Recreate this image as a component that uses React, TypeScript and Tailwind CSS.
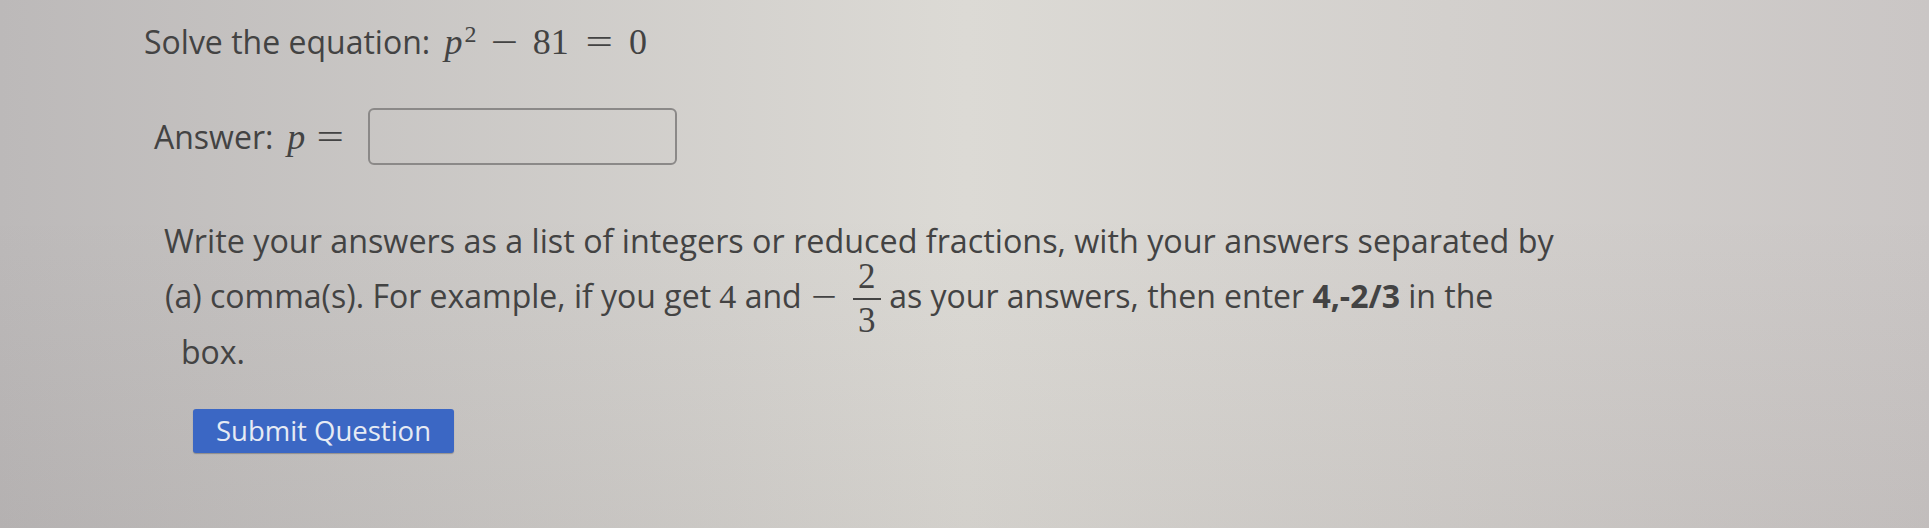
export default function App() {
  const math = "font-['Liberation_Serif',serif]";
  const op = 'inline-block scale-x-[1.35]';

  return (
    <div className="w-[1929px] h-[528px] overflow-hidden bg-[linear-gradient(to_bottom,transparent_40%,rgba(60,50,50,0.06)),linear-gradient(to_right,#bcb9b9,#dcdad5_50%,#cac6c5)] font-['Open_Sans',sans-serif] text-[#434343]">
      {/* question */}
      <div className="pl-[144px] pt-[21px] text-[32px] leading-[42px] whitespace-nowrap">
        Solve the equation:{' '}
        <span className={`${math} text-[36px] ml-[6px]`}>
          <i>p</i>
          <sup className="text-[24px] relative -top-[12px] ml-[2px]">2</sup>
          <span className={`${op} mx-[18px]`}>−</span>81<span className={`${op} mx-[20px]`}>=</span>0
        </span>
      </div>

      {/* answer row */}
      <div className="flex items-center mt-[45px] pl-[154px] text-[32px] leading-[42px]">
        <span>Answer:</span>
        <span className={`${math} text-[36px] ml-[14px]`}>
          <i>p</i>
          <span className={`${op} ml-[15px]`}>=</span>
        </span>
        <input
          type="text"
          className="ml-[27px] w-[309px] h-[57px] rounded-[6px] border-2 border-[#8b8988] bg-transparent outline-none"
        />
      </div>

      {/* instructions */}
      <div className="mt-[48px] text-[32.3px] leading-[55px] whitespace-nowrap">
        <div className="pl-[164px]">
          Write your answers as a list of integers or reduced fractions, with your answers separated by
        </div>
        <div className="pl-[165px] text-[32px]">
          (a) comma(s). For example, if you get <span className={`${math} text-[34px]`}>4</span> and
          <span className={`${math} ${op} text-[34px] ml-[12px]`}>−</span>
          <span className={`${math} inline-flex flex-col items-center align-middle -my-[17px] ml-[20px] text-[35px]`}>
            <span className="leading-[24px] mb-[9px]">2</span>
            <span className="w-[28px] h-[2px] bg-[#434343]" />
            <span className="leading-[24px] mt-[9px]">3</span>
          </span>{' '}
          as your answers, then enter <b className="font-bold">4,-2/3</b> in the
        </div>
        <div className="pl-[181px] text-[32px]">box.</div>
      </div>

      {/* submit */}
      <div className="mt-[30px] pl-[193px]">
        <button className="w-[261px] h-[44px] rounded-[3px] bg-[#3b67c4] text-[#e6ebf4] text-[27.5px] leading-none shadow-[0_1px_1px_rgba(0,0,0,0.25)]">
          Submit Question
        </button>
      </div>
    </div>
  );
}
